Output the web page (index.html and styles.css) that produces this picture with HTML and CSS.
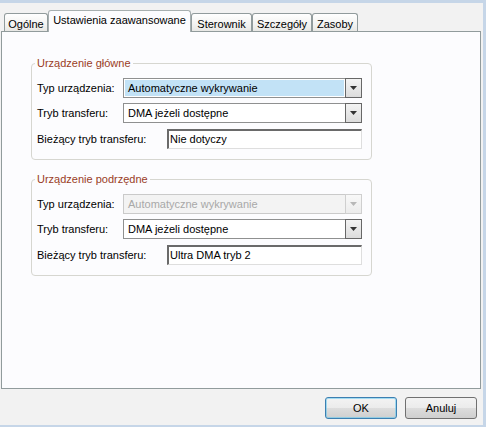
FILE: index.html
```html
<!DOCTYPE html>
<html lang="pl">
<head>
<meta charset="utf-8">
<title>Ustawienia zaawansowane</title>
<link rel="stylesheet" href="styles.css">
</head>
<body>
<div class="window">
  <div class="tabs">
    <div class="tab tab-general">Ogólne</div>
    <div class="tab tab-active">Ustawienia zaawansowane</div>
    <div class="tab tab-driver">Sterownik</div>
    <div class="tab tab-details">Szczegóły</div>
    <div class="tab tab-resources">Zasoby</div>
  </div>
  <div class="panel">
    <fieldset class="group">
      <legend>Urządzenie główne</legend>
      <div class="row">
        <span class="label">Typ urządzenia:</span>
        <div class="combo">
          <span class="value value-selected">Automatyczne wykrywanie</span>
          <span class="drop"><svg width="7" height="4" viewBox="0 0 7 4"><path d="M0 0h7L3.5 4z" fill="#333"/></svg></span>
        </div>
      </div>
      <div class="row">
        <span class="label">Tryb transferu:</span>
        <div class="combo">
          <span class="value">DMA jeżeli dostępne</span>
          <span class="drop"><svg width="7" height="4" viewBox="0 0 7 4"><path d="M0 0h7L3.5 4z" fill="#333"/></svg></span>
        </div>
      </div>
      <div class="row row-field">
        <span class="label label-wide">Bieżący tryb transferu:</span>
        <div class="field">Nie dotyczy</div>
      </div>
    </fieldset>
    <fieldset class="group">
      <legend>Urządzenie podrzędne</legend>
      <div class="row">
        <span class="label">Typ urządzenia:</span>
        <div class="combo combo-disabled">
          <span class="value">Automatyczne wykrywanie</span>
          <span class="drop"><svg width="7" height="4" viewBox="0 0 7 4"><path d="M0 0h7L3.5 4z" fill="#b8b8b8"/></svg></span>
        </div>
      </div>
      <div class="row">
        <span class="label">Tryb transferu:</span>
        <div class="combo">
          <span class="value">DMA jeżeli dostępne</span>
          <span class="drop"><svg width="7" height="4" viewBox="0 0 7 4"><path d="M0 0h7L3.5 4z" fill="#333"/></svg></span>
        </div>
      </div>
      <div class="row row-field">
        <span class="label label-wide">Bieżący tryb transferu:</span>
        <div class="field">Ultra DMA tryb 2</div>
      </div>
    </fieldset>
  </div>
  <div class="buttons">
    <button class="btn btn-default">OK</button>
    <button class="btn">Anuluj</button>
  </div>
</div>
</body>
</html>
```
FILE: styles.css
```css
html, body {
  margin: 0;
  padding: 0;
}

body {
  background: #f2f2f2;
  font: 11px "Liberation Sans", Arial, sans-serif;
  color: #000;
}

.window {
  box-sizing: border-box;
  width: 486px;
  height: 427px;
  border-top: 3px solid #c6d6e8;
  border-right: 3px solid #c6d6e8;
  border-bottom: 2px solid #c6d6e8;
  display: flex;
  flex-direction: column;
}

/* Tabs */
.tabs {
  display: flex;
  align-items: flex-end;
  height: 21px;
  margin-top: 7px;
  padding-left: 4px;
}

.tab {
  box-sizing: border-box;
  height: 18px;
  padding-top: 3px;
  line-height: 14px;
  text-align: center;
  white-space: nowrap;
  border: 1px solid #919b9c;
  border-bottom: 0;
  border-radius: 3px 3px 0 0;
  background: linear-gradient(#ffffff, #f3f3f1 60%, #e8e8e5);
}

.tab-general { width: 44px; }
.tab-driver { width: 61px; }
.tab-details { width: 60px; }
.tab-resources { width: 46px; }

.tab-active {
  width: 143px;
  height: 22px;
  margin-bottom: -1px;
  padding-top: 2px;
  position: relative;
  z-index: 1;
  background: #fcfcfe;
  border-color: #a7afb0;
}

/* Panel */
.panel {
  box-sizing: border-box;
  width: 480px;
  height: 358px;
  margin-left: 1px;
  padding: 24px 0 0 29px;
  border: 1px solid #919b9c;
  background: #fcfcfe;
}

.group {
  box-sizing: border-box;
  width: 341px;
  margin: 0 0 12px 0;
  padding: 8px 9px 10px 5px;
  border: 1px solid #d6d6d0;
  border-radius: 4px;
}

.group legend {
  margin-left: -2px;
  padding: 0 2px;
  line-height: 14px;
  color: #9a3d1f;
}

.row {
  display: flex;
  align-items: center;
  height: 20px;
  margin-top: 5px;
}

.row:first-of-type {
  margin-top: 0;
}

.row-field {
  margin-top: 6px;
}

.label {
  flex: none;
  width: 86px;
  white-space: nowrap;
}

.label-wide {
  width: 130px;
}

/* Combo box */
.combo {
  flex: 1;
  box-sizing: border-box;
  height: 20px;
  display: flex;
  border: 1px solid #8f9090;
  background: #fff;
}

.value {
  flex: 1;
  margin: 1px 1px 1px 1px;
  padding-left: 3px;
  line-height: 16px;
  white-space: nowrap;
  overflow: hidden;
}

.value-selected {
  background: #c2e2f6;
}

.drop {
  box-sizing: border-box;
  flex: none;
  width: 17px;
  margin: -1px -1px -1px 0;
  display: flex;
  align-items: center;
  justify-content: center;
  border: 1px solid #676767;
  background: linear-gradient(#f3f3f3, #dcdcdc);
}

.combo-disabled {
  border-color: #cacaca;
  background: #f3f3f3;
  color: #a8a8a8;
}

.combo-disabled .drop {
  border-color: #cfcfcf;
  background: linear-gradient(#f8f8f8, #ececec);
}

/* Read-only field */
.field {
  flex: 1;
  box-sizing: border-box;
  height: 20px;
  padding-left: 1px;
  line-height: 17px;
  border-top: 2px solid #6a6a6a;
  border-left: 2px solid #6a6a6a;
  border-right: 1px solid #dedede;
  border-bottom: 1px solid #dedede;
  background: #fff;
  white-space: nowrap;
}

/* Buttons */
.buttons {
  display: flex;
  justify-content: flex-end;
  gap: 8px;
  padding: 8px 6px 0 0;
}

.btn {
  box-sizing: border-box;
  width: 72px;
  height: 22px;
  padding: 0;
  font: 11px "Liberation Sans", Arial, sans-serif;
  color: #000;
  border: 1px solid #707070;
  border-radius: 3px;
  background: linear-gradient(#f3f3f3 0%, #ebebeb 50%, #dddddd 50%, #cfcfcf 100%);
}

.btn-default {
  border-color: #3c7fb1;
  box-shadow: inset 0 0 0 1px rgba(96, 200, 240, 0.55);
}
```
